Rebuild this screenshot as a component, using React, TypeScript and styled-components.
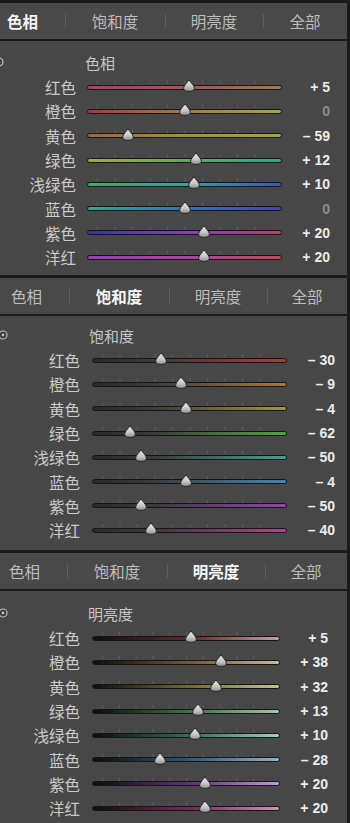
import React from 'react';
import styled, { createGlobalStyle } from 'styled-components';

const GlobalStyle = createGlobalStyle`
  html, body {
    margin: 0;
    padding: 0;
    background: #454545;
  }
  * {
    box-sizing: border-box;
  }
`;

const CJK = `"Noto Sans CJK SC", "Noto Sans", sans-serif`;
const EDGE = '#1b1b1b';

type Adj = { name: string; value: number; track: string };

type PanelConf = {
  title: string;
  active: number;
  shift: number;
  top: number;
  label: number;
  gap: number;
  track: number;
  titleX: number;
  iconX: number;
  rows: Adj[];
};

const TABS = ['色相', '饱和度', '明亮度', '全部'];

const hueRows: Adj[] = [
  { name: '红色', value: 5, track: 'linear-gradient(90deg, #b03a68, #ac4e58 50%, #a67a44)' },
  { name: '橙色', value: 0, track: 'linear-gradient(90deg, #a83444, #a67a3e 50%, #a6a648)' },
  { name: '黄色', value: -59, track: 'linear-gradient(90deg, #a6643a, #a49038 45%, #a2a640)' },
  { name: '绿色', value: 12, track: 'linear-gradient(90deg, #a6a648, #62a85c 50%, #34a28e)' },
  { name: '浅绿色', value: 10, track: 'linear-gradient(90deg, #44a862, #32a2a0 50%, #4450b8)' },
  { name: '蓝色', value: 0, track: 'linear-gradient(90deg, #34a492, #3474b0 50%, #4242b4)' },
  { name: '紫色', value: 20, track: 'linear-gradient(90deg, #3438a4, #8040b2 50%, #b04070)' },
  { name: '洋红', value: 20, track: 'linear-gradient(90deg, #9442b8, #b040a0 50%, #c24858)' },
];

const sat = (c: string) => `linear-gradient(90deg, #2a2a2a, #3a3a3a 30%, ${c})`;
const satRows: Adj[] = [
  { name: '红色', value: -30, track: sat('#a83a3a') },
  { name: '橙色', value: -9, track: sat('#a8783a') },
  { name: '黄色', value: -4, track: sat('#a2983a') },
  { name: '绿色', value: -62, track: sat('#52a444') },
  { name: '浅绿色', value: -50, track: sat('#40a292') },
  { name: '蓝色', value: -4, track: sat('#4288b2') },
  { name: '紫色', value: -50, track: sat('#9442b4') },
  { name: '洋红', value: -40, track: sat('#b04292') },
];

const lum = (mid: string, end: string) =>
  `linear-gradient(90deg, #0e0e0e, ${mid} 55%, ${end})`;
const lumRows: Adj[] = [
  { name: '红色', value: 5, track: lum('#6e2a2c', '#c4a0a2') },
  { name: '橙色', value: 38, track: lum('#7e5a32', '#c8b894') },
  { name: '黄色', value: 32, track: lum('#76702e', '#c0c094') },
  { name: '绿色', value: 13, track: lum('#3a7c40', '#a4c8a4') },
  { name: '浅绿色', value: 10, track: lum('#2e7462', '#a0d0c0') },
  { name: '蓝色', value: -28, track: lum('#2e5e80', '#94b2c8') },
  { name: '紫色', value: 20, track: lum('#6c2e8c', '#c896d6') },
  { name: '洋红', value: 20, track: lum('#7c2e5c', '#c896b4') },
];

const panels: PanelConf[] = [
  { title: '色相', active: 0, shift: 0, top: 10, label: 76, gap: 11, track: 195, titleX: 85, iconX: -1, rows: hueRows },
  { title: '饱和度', active: 1, shift: 4, top: 8, label: 80, gap: 12, track: 195, titleX: 89, iconX: 3, rows: satRows },
  { title: '明亮度', active: 2, shift: 2, top: 11, label: 80, gap: 12, track: 188, titleX: 88, iconX: 3, rows: lumRows },
];

const Page = styled.div`
  width: 350px;
  height: 823px;
  overflow: hidden;
  background: ${EDGE};
`;

const Panel = styled.section`
  height: 275px;
  border-top: 3px solid ${EDGE};
  border-right: 3px solid ${EDGE};
  background: #474747;
  overflow: hidden;
`;

const TabBar = styled.div<{ $shift: number }>`
  display: grid;
  grid-template-columns: 65px 100px 98px 1fr;
  align-items: center;
  height: 38px;
  padding-left: ${(p) => p.$shift}px;
  border-bottom: 2px solid ${EDGE};
  background: #494949;
`;

const Tab = styled.div<{ $active: boolean; $first: boolean }>`
  position: relative;
  display: flex;
  justify-content: center;
  padding-right: ${(p) => (p.$first ? 20 : 0)}px;
  font-family: ${CJK};
  font-size: 15.5px;
  line-height: 20px;
  color: ${(p) => (p.$active ? '#f6f6f6' : '#bcbcbc')};
  font-weight: ${(p) => (p.$active ? 700 : 400)};

  &::before {
    content: '';
    display: ${(p) => (p.$first ? 'none' : 'block')};
    position: absolute;
    left: 0;
    top: 3px;
    width: 1px;
    height: 14px;
    background: #5e5e5e;
  }
`;

const Body = styled.div<{ $top: number }>`
  padding-top: ${(p) => p.$top}px;
`;

const TitleRow = styled.div`
  display: flex;
  align-items: center;
  height: 24px;
  padding-bottom: 2px;
`;

const TargetIcon = styled.svg<{ $x: number }>`
  flex: none;
  width: 10px;
  height: 10px;
  margin-left: ${(p) => p.$x - 5}px;
`;

const Title = styled.div<{ $gap: number }>`
  margin-left: ${(p) => p.$gap}px;
  font-family: ${CJK};
  font-size: 15px;
  color: #c6c6c6;
`;

const Row = styled.div<{ $label: number; $gap: number; $track: number }>`
  display: grid;
  grid-template-columns: ${(p) => `${p.$label}px ${p.$track}px 48px`};
  align-items: center;
  height: 24.3px;

  & > :first-child {
    margin-right: ${(p) => p.$gap}px;
  }
`;

const Label = styled.div`
  text-align: right;
  font-family: ${CJK};
  font-size: 15.5px;
  line-height: 20px;
  color: #cacaca;
  white-space: nowrap;
`;

const TrackWrap = styled.div`
  position: relative;
  height: 12px;
  display: flex;
  align-items: center;
`;

const Ticks = styled.div`
  position: absolute;
  left: 10px;
  right: 10px;
  top: 0;
  height: 3px;
  background-image: linear-gradient(90deg, rgba(255, 255, 255, 0.13) 0 1px, transparent 1px);
  background-size: 10% 100%;
  background-repeat: repeat-x;
`;

const Track = styled.div<{ $bg: string }>`
  position: relative;
  width: 100%;
  height: 5px;
  border: 1px solid #161616;
  border-radius: 3px;
  background: ${(p) => p.$bg};
`;

const Thumb = styled.svg`
  position: absolute;
  top: -6.5px;
  width: 12px;
  height: 13px;
  overflow: visible;
`;

const Value = styled.div<{ $zero: boolean }>`
  text-align: right;
  font-family: 'Liberation Sans', Arial, sans-serif;
  font-size: 14px;
  font-weight: 700;
  color: ${(p) => (p.$zero ? '#8c8c8c' : '#ececec')};
  white-space: pre;
`;

const fmt = (v: number) => (v > 0 ? `+ ${v}` : v < 0 ? `\u2013 ${-v}` : '0');

const Slider = ({ value, bg }: { value: number; bg: string }) => {
  const pct = (value + 100) / 2;
  return (
    <TrackWrap>
      <Ticks />
      <Track $bg={bg}>
        <Thumb viewBox="0 0 12 13" style={{ left: `calc(${pct}% - 6px)` }}>
          <defs>
            <linearGradient id="thumbFill" x1="0" y1="0" x2="0" y2="1">
              <stop offset="0" stopColor="#f2f2f2" />
              <stop offset="0.6" stopColor="#c4c4c4" />
              <stop offset="1" stopColor="#8c8c8c" />
            </linearGradient>
          </defs>
          <path
            d="M6 0.6 C7.2 3.4 11.4 6.2 11.4 9.2 C11.4 11.4 9 12.4 6 12.4 C3 12.4 0.6 11.4 0.6 9.2 C0.6 6.2 4.8 3.4 6 0.6 Z"
            fill="url(#thumbFill)"
            stroke="#262626"
            strokeWidth="1"
          />
        </Thumb>
      </Track>
    </TrackWrap>
  );
};

const HslPanel = ({ conf }: { conf: PanelConf }) => (
  <Panel>
    <TabBar $shift={conf.shift}>
      {TABS.map((t, i) => (
        <Tab key={t} $active={i === conf.active} $first={i === 0}>
          {t}
        </Tab>
      ))}
    </TabBar>
    <Body $top={conf.top}>
      <TitleRow>
        <TargetIcon $x={conf.iconX} viewBox="0 0 10 10">
          <circle cx="5" cy="5" r="4" fill="#3a3a3a" stroke="#bdbdbd" strokeWidth="1.2" />
          <circle cx="5" cy="5" r="1.4" fill="#bdbdbd" />
        </TargetIcon>
        <Title $gap={conf.titleX - (conf.iconX + 5)}>{conf.title}</Title>
      </TitleRow>
      {conf.rows.map((r) => (
        <Row key={r.name} $label={conf.label + conf.gap} $gap={conf.gap} $track={conf.track}>
          <Label>{r.name}</Label>
          <Slider value={r.value} bg={r.track} />
          <Value $zero={r.value === 0}>{fmt(r.value)}</Value>
        </Row>
      ))}
    </Body>
  </Panel>
);

export default function App() {
  return (
    <>
      <GlobalStyle />
      <Page>
        {panels.map((p) => (
          <HslPanel key={p.title} conf={p} />
        ))}
      </Page>
    </>
  );
}
